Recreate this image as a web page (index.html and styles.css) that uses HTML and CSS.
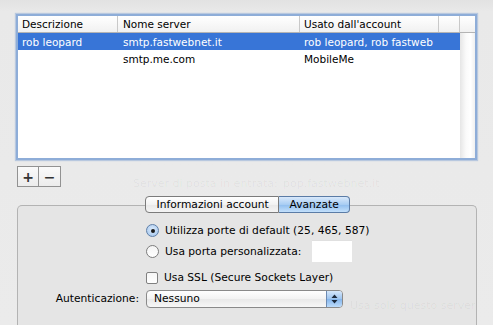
FILE: index.html
```html
<!DOCTYPE html>
<html lang="it">
<head>
    <meta charset="UTF-8">
    <title>Server di posta in uscita</title>
    <link rel="stylesheet" href="styles.css">
</head>
<body>
    <div class="sheet">
        <!-- Server list -->
        <div class="list-frame">
            <div class="list">
                <div class="row head">
                    <div class="cell c1">Descrizione</div>
                    <div class="cell c2">Nome server</div>
                    <div class="cell c3">Usato dall'account</div>
                    <div class="cell c4"></div>
                    <div class="cell c5"></div>
                </div>
                <div class="row selected">
                    <div class="cell c1">rob leopard</div>
                    <div class="cell c2">smtp.fastwebnet.it</div>
                    <div class="cell c3">rob leopard, rob fastweb</div>
                    <div class="cell c4"></div>
                </div>
                <div class="row">
                    <div class="cell c1"></div>
                    <div class="cell c2">smtp.me.com</div>
                    <div class="cell c3">MobileMe</div>
                    <div class="cell c4"></div>
                </div>
            </div>
            <div class="scroller"></div>
        </div>

        <div class="add-remove">
            <button class="small-btn">+</button>
            <button class="small-btn">&minus;</button>
        </div>

        <!-- Tab view -->
        <div class="tabview">
            <div class="tabs">
                <span class="tab">Informazioni account</span>
                <span class="tab active">Avanzate</span>
            </div>
            <div class="tab-box">
                <div class="form">
                    <div class="label"></div>
                    <div class="field">
                        <label class="option"><span class="radio on"></span>Utilizza porte di default (25, 465, 587)</label>
                    </div>

                    <div class="label"></div>
                    <div class="field">
                        <label class="option"><span class="radio"></span>Usa porta personalizzata:</label>
                        <span class="text-input"></span>
                    </div>

                    <div class="label"></div>
                    <div class="field ssl">
                        <label class="option"><span class="check"></span>Usa SSL (Secure Sockets Layer)</label>
                    </div>

                    <div class="label">Autenticazione:</div>
                    <div class="field">
                        <div class="popup">
                            <span>Nessuno</span>
                            <span class="popup-arrows">
                                <svg width="7" height="10" viewBox="0 0 7 10"><path d="M3.5 0.5 L6.5 4 H0.5 Z M3.5 9.5 L6.5 6 H0.5 Z" fill="#1c2a3d"/></svg>
                            </span>
                        </div>
                    </div>
                </div>
            </div>
        </div>
    </div>

    <!-- window behind the sheet, showing through -->
    <div class="ghost">
        <span class="g1">Server di posta in entrata:</span>
        <span class="g2">pop.fastwebnet.it</span>
        <span class="g5">Usa solo questo server</span>
    </div>
</body>
</html>
```

FILE: styles.css
```css
body {
    margin: 0;
    width: 493px;
    height: 325px;
    overflow: hidden;
    position: relative;
    background: linear-gradient(#e2e2e2, #e9e9e9 12px, #ebebeb);
    font-family: "DejaVu Sans", "Liberation Sans", sans-serif;
    font-size: 10.7px;
    color: #000;
}

.sheet {
    padding: 14px 0 0 16px;
}

/* Server list */
.list-frame {
    width: 457px;
    height: 142px;
    border: 2px solid #8eadd8;
    box-shadow: 0 0 1px 1px rgba(125, 160, 210, 0.45);
    background: #fff;
    display: flex;
}

.list {
    width: 442px;
}

.row {
    display: flex;
    height: 17px;
    align-items: center;
    font-size: 10.5px;
}

.row.head {
    height: 16px;
    border-bottom: 1px solid #b4b4b4;
    background: linear-gradient(#ffffff, #f1f1f1);
    margin-right: -15px;
}

.row.selected {
    background: #3875d7;
    color: #fff;
}

.cell {
    height: 100%;
    display: flex;
    align-items: center;
    padding-left: 4px;
    box-sizing: border-box;
    white-space: nowrap;
}

.head .cell {
    border-right: 1px solid #c9c9c9;
}

.c1 { width: 100px; }
.c2 { width: 182px; padding-left: 5px; }
.c3 { width: 139px; }
.c4 { width: 21px; }
.c5 { width: 15px; border-right: none !important; }

.scroller {
    width: 15px;
    margin-top: 17px;
    background: linear-gradient(90deg, #e6e6e6, #fafafa 40%, #ffffff 70%, #f0f0f0);
}

/* + and - buttons */
.add-remove {
    display: flex;
    margin: 6px 0 0 1px;
}

.small-btn {
    width: 22px;
    height: 21px;
    border: 1px solid #929292;
    background: linear-gradient(#fafafa, #ececec);
    font-family: "DejaVu Sans", sans-serif;
    font-size: 14px;
    font-weight: bold;
    color: #333;
    padding: 0;
    line-height: 16px;
}

.small-btn + .small-btn {
    border-left: none;
}

/* Tab view */
.tabview {
    margin: 9px 0 0 1px;
    width: 460px;
}

.tabs {
    display: flex;
    justify-content: center;
    position: relative;
    z-index: 1;
    margin-bottom: -8px;
}

.tab {
    height: 15px;
    line-height: 15px;
    border: 1px solid #7b7b7b;
    background: linear-gradient(#ffffff, #f2f2f2 50%, #e8e8e8 51%, #f4f4f4);
    font-size: 10.7px;
    white-space: nowrap;
}

.tab:first-child {
    border-radius: 4px 0 0 4px;
    width: 121px;
    padding: 0 0 0 11px;
}

.tab.active {
    border-left: none;
    border-radius: 0 4px 4px 0;
    padding: 0 0 0 11px;
    width: 59px;
    background: linear-gradient(#d9e9fb, #a9cdf3 50%, #8fbdee 51%, #c3e0fb);
    border-color: #5b7ca6;
}

.tab-box {
    height: 125px;
    border: 1px solid #b3b3b3;
    border-bottom: none;
    border-radius: 5px 5px 0 0;
    background: #e5e5e5;
}

.form {
    display: grid;
    grid-template-columns: 121px 1fr;
    column-gap: 7px;
    padding-top: 15px;
}

.label {
    text-align: right;
    display: flex;
    align-items: center;
    justify-content: flex-end;
}

.field {
    display: flex;
    align-items: center;
    min-height: 19px;
}

.field.ssl {
    margin-top: 6px;
    margin-bottom: 2px;
}

.option {
    display: flex;
    align-items: center;
    gap: 6px;
    white-space: nowrap;
}

.radio {
    width: 11px;
    height: 11px;
    border-radius: 50%;
    border: 1px solid #7d7d7d;
    background: linear-gradient(#f4f4f4, #ffffff);
    box-sizing: content-box;
    display: flex;
    align-items: center;
    justify-content: center;
}

.radio.on {
    background: radial-gradient(circle at 50% 40%, #dbeafb, #9fc3ec);
    border-color: #5f7fa8;
}

.radio.on::after {
    content: "";
    width: 4px;
    height: 4px;
    border-radius: 50%;
    background: #1a1a1a;
}

.check {
    width: 10px;
    height: 10px;
    border: 1px solid #808080;
    border-radius: 2px;
    background: linear-gradient(#f6f6f6, #ffffff);
}

.text-input {
    width: 40px;
    height: 21px;
    margin-left: 11px;
    background: #fff;
    border-top: 1px solid #e0e0e0;
}

.popup {
    width: 188px;
    height: 16px;
    border: 1px solid #8a8a8a;
    border-radius: 4px;
    background: linear-gradient(#ffffff, #f3f3f3 50%, #e9e9e9 51%, #f7f7f7);
    display: flex;
    align-items: center;
    justify-content: space-between;
    padding-left: 7px;
    overflow: hidden;
    font-size: 10.7px;
}

.popup-arrows {
    width: 15px;
    height: 100%;
    border-left: 1px solid #6d8bb3;
    background: linear-gradient(#d5e7fb, #9dc4ef 50%, #84b5ec 51%, #bddcfb);
    display: flex;
    align-items: center;
    justify-content: center;
}

/* faint text of the window behind */
.ghost {
    position: absolute;
    inset: 0;
    pointer-events: none;
    color: rgba(0, 0, 0, 0.045);
    font-size: 11px;
}

.ghost span {
    position: absolute;
}

.g1 { left: 133px; top: 177px; }
.g2 { left: 283px; top: 177px; }
.g5 { left: 350px; top: 299px; }
```
